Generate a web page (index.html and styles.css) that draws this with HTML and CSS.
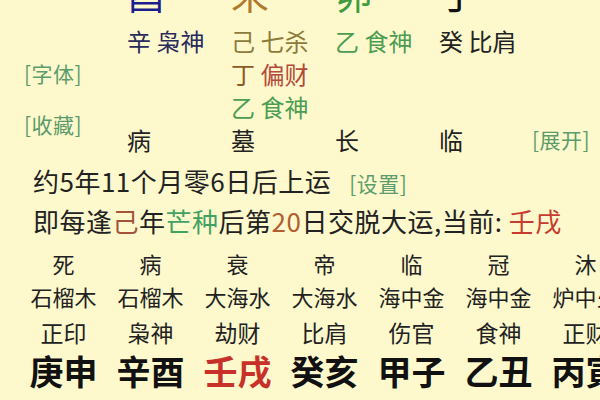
FILE: index.html
```html
<!DOCTYPE html>
<html lang="zh-CN">
<head>
<meta charset="utf-8">
<title>排盘</title>
<link rel="stylesheet" href="styles.css">
</head>
<body>
<div class="page">
  <div class="pillars">
    <div class="big p1 r1 c-you">酉</div>
    <div class="big p2 r1 c-wei">未</div>
    <div class="big p3 r1 c-mao">卯</div>
    <div class="big p4 r1 c-ding">丁</div>

    <div class="cell p1 r2 c-navy">辛 枭神</div>
    <div class="cell p2 r2 c-olive">己 七杀</div>
    <div class="cell p3 r2 c-green">乙 食神</div>
    <div class="cell p4 r2 c-dark">癸 比肩</div>

    <div class="link side-a">[字体]</div>
    <div class="cell p2 r3"><span class="c-brown">丁</span> <span class="c-red">偏财</span></div>
    <div class="cell p2 r4 c-green">乙 食神</div>
    <div class="link side-b">[收藏]</div>

    <div class="cell p1 r5 c-dark">病</div>
    <div class="cell p2 r5 c-dark">墓</div>
    <div class="cell p3 r5 c-dark">长</div>
    <div class="cell p4 r5 c-dark">临</div>
    <div class="link p5 r5">[展开]</div>
  </div>

  <div class="line first">约5年11个月零6日后上运<span class="link set">[设置]</span></div>
  <div class="line">即每逢<span class="t-ji">己</span>年<span class="t-mz">芒种</span>后第<span class="t-num">20</span>日交脱大运,当前: <span class="t-cur">壬戌</span></div>

  <div class="dayun">
    <div class="ds">死</div><div class="ds">病</div><div class="ds">衰</div><div class="ds">帝</div><div class="ds">临</div><div class="ds">冠</div><div class="ds">沐</div>
    <div class="ny">石榴木</div><div class="ny">石榴木</div><div class="ny">大海水</div><div class="ny">大海水</div><div class="ny">海中金</div><div class="ny">海中金</div><div class="ny">炉中火</div>
    <div class="ss">正印</div><div class="ss">枭神</div><div class="ss">劫财</div><div class="ss">比肩</div><div class="ss">伤官</div><div class="ss">食神</div><div class="ss">正财</div>
    <div class="gz">庚申</div><div class="gz">辛酉</div><div class="gz cur">壬戌</div><div class="gz">癸亥</div><div class="gz">甲子</div><div class="gz">乙丑</div><div class="gz">丙寅</div>
  </div>
</div>
</body>
</html>
```

FILE: styles.css
```css
html, body {
  margin: 0;
  padding: 0;
  width: 600px;
  height: 400px;
  overflow: hidden;
  background: #fdf9cd;
}
.page {
  font-family: "Noto Sans CJK SC", "Noto Sans", sans-serif;
  color: #222;
  white-space: nowrap;
}
.pillars {
  display: grid;
  grid-template-columns: 103px 104px 104px 104px 93px auto;
  grid-template-rows: 50px 33px 33px 33px 35px;
  margin-top: -26px;
  padding-left: 24px;
}
.big {
  font-size: 38px;
  line-height: 38px;
  align-self: start;
}
.cell {
  font-size: 24px;
  line-height: 33px;
}
.link {
  font-size: 21px;
  line-height: 33px;
  letter-spacing: 0.5px;
  color: #5c9c6c;
}
.p1 { grid-column: 2; }
.p2 { grid-column: 3; }
.p3 { grid-column: 4; }
.p4 { grid-column: 5; }
.p5 { grid-column: 6; }
.r1 { grid-row: 1; }
.r2 { grid-row: 2; }
.r3 { grid-row: 3; }
.r4 { grid-row: 4; }
.r5 { grid-row: 5; }
.side-a { grid-column: 1; grid-row: 3; }
.side-b { grid-column: 1; grid-row: 4 / 6; align-self: center; }

.c-you { color: #1c1c8c; }
.c-wei { color: #b07a2c; }
.c-mao { color: #3e9c3e; }
.c-ding { color: #111; }
.c-navy { color: #2a2a5c; }
.c-olive { color: #8c7c3c; }
.c-green { color: #4c9c52; }
.c-dark { color: #222; }
.c-brown { color: #8c5a22; }
.c-red { color: #b44a3a; }

.line {
  font-size: 26px;
  line-height: 40px;
  letter-spacing: 0.5px;
  padding-left: 33px;
}
.line.first { margin-top: 3px; }
.set { margin-left: 18px; font-size: 21px; }
.t-ji { color: #a4523c; }
.t-mz { color: #42a262; }
.t-num { color: #b45e30; }
.t-cur { color: #c83c30; }

.dayun {
  display: grid;
  grid-template-columns: repeat(7, 87px);
  grid-template-rows: 32px 34px 38px 40px;
  margin-top: 6px;
  padding-left: 20px;
  text-align: center;
}
.ds { font-size: 22px; line-height: 32px; }
.ny { font-size: 22px; line-height: 34px; }
.ss { font-size: 23px; line-height: 38px; }
.gz { font-size: 34px; line-height: 40px; font-weight: 700; color: #111; }
.gz.cur { color: #c8302a; }
```
